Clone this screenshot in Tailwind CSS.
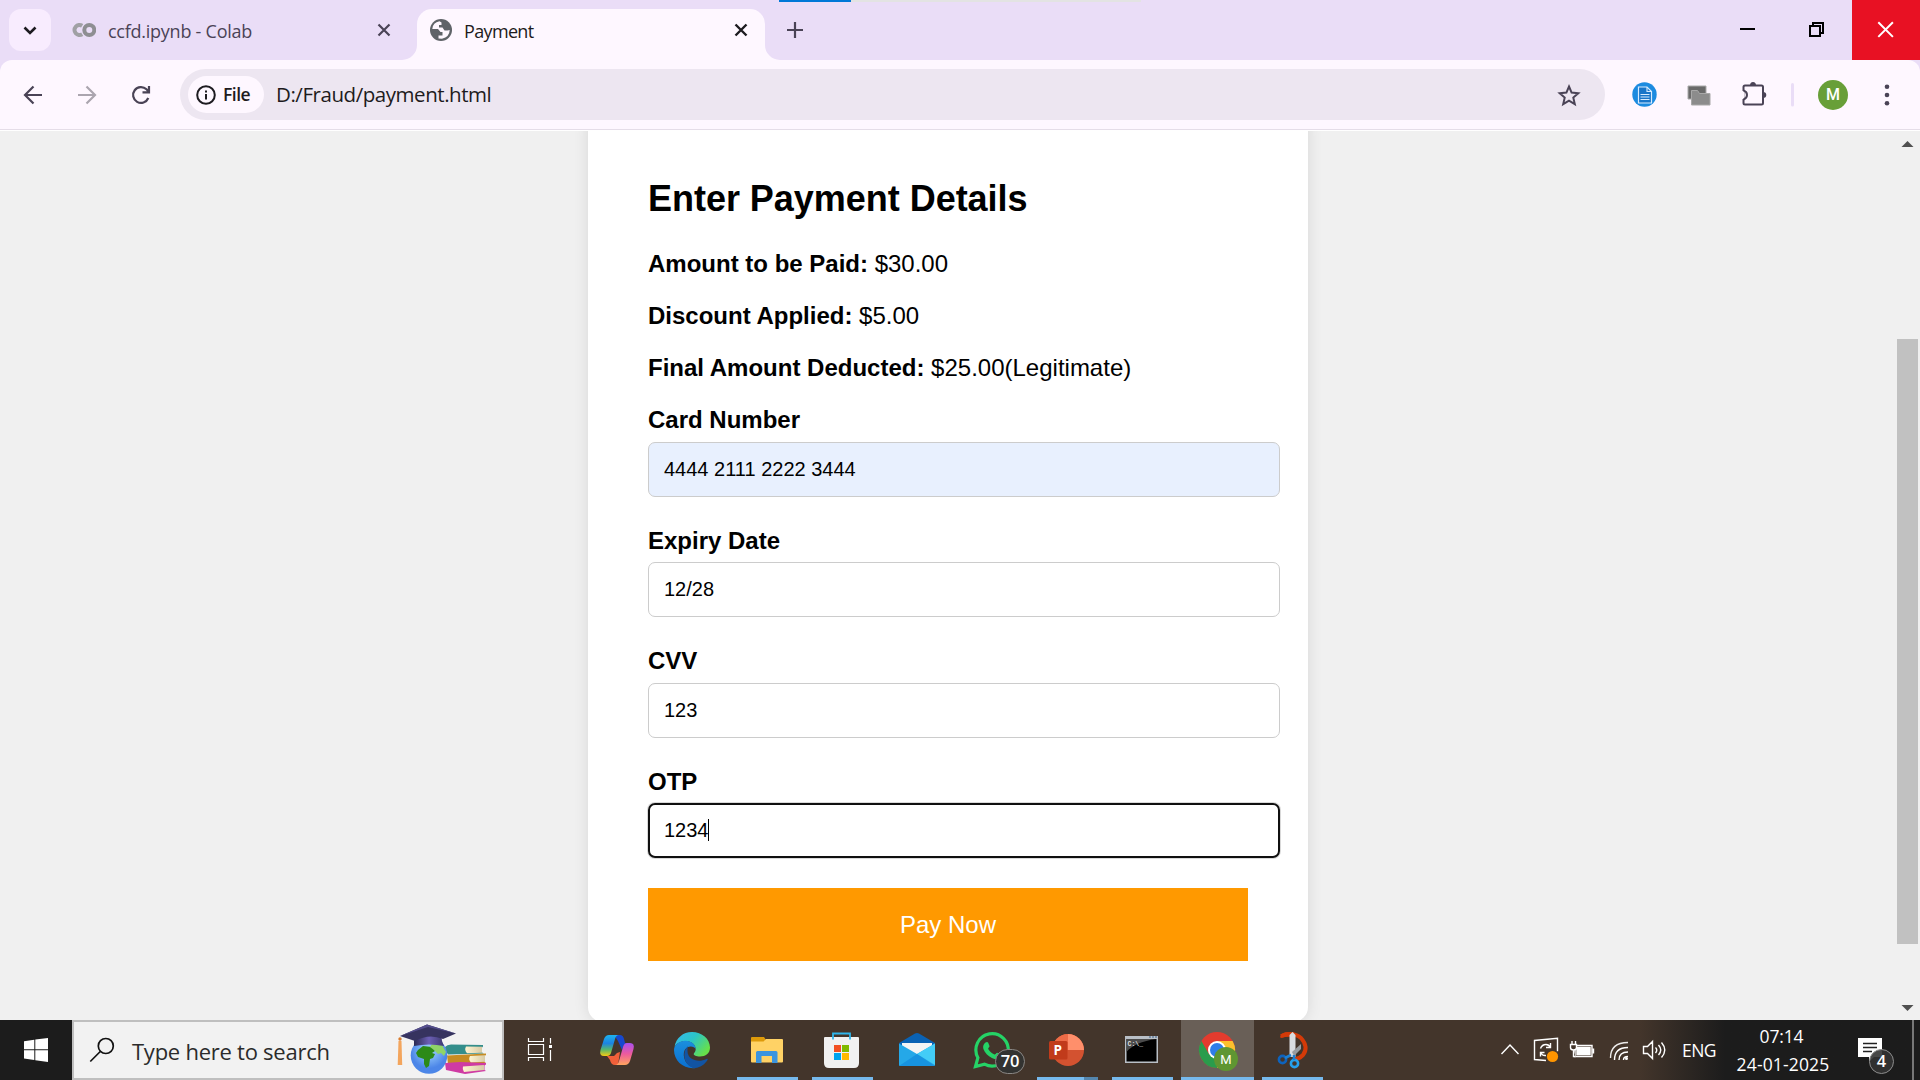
<!DOCTYPE html>
<html lang="en">
<head>
<meta charset="utf-8">
<title>Payment</title>
<script src="https://cdn.jsdelivr.net/npm/@tailwindcss/browser@4"></script>
</head>
<body class="w-[1920px] h-[1080px] overflow-hidden flex flex-col bg-[#f0f0f0] font-['Open_Sans',sans-serif]">

<!-- Tab strip -->
<header class="relative h-[60px] shrink-0 flex bg-[#eaddf7] text-[18px]">
  <div class="absolute left-[779px] top-0 w-[362px] h-[2px] bg-[#e3e3e3]"><div class="w-[72px] h-[2px] bg-[#0078d7]"></div></div>
  <button class="ml-[9px] mt-[9px] size-[42px] rounded-xl bg-[#f8ecfe] flex items-center justify-center">
    <svg class="size-[42px]" viewBox="9 9 42 42" fill="none" stroke="#1d1b20" stroke-width="2.6"><path d="M24.5 27.5l5.5 5.5 5.5-5.5"/></svg>
  </button>
  <div class="w-[366px] flex items-center pl-[21px] pr-[18px] text-[#4a4356]">
    <svg class="w-[24px] h-[16px] mr-[12px]" viewBox="0 0 24 16" fill="none" stroke-width="4"><path d="M10.2 3.8A5 5 0 1 0 10.2 12.2" stroke="#a0a0a4"/><circle cx="17.3" cy="8" r="5" stroke="#8e8e92"/></svg>
    <span class="grow tracking-[-0.25px] leading-[24px] pt-[2px]">ccfd.ipynb - Colab</span>
    <svg class="size-[30px]" viewBox="-15 -15 30 30" stroke="#4a4356" stroke-width="2.2"><path d="M-5.5-5.5L5.5 5.5M5.5-5.5L-5.5 5.5"/></svg>
  </div>
  <div class="relative w-[348px] mt-[9px] h-[51px] rounded-t-[15px] bg-[#fef7ff] flex items-center pl-[13px] pr-[9px] pb-[9px] text-[#1d1b20]">
    <svg class="absolute -left-[15px] bottom-0 size-[15px]" viewBox="0 0 15 15"><path d="M15 0V15H0A15 15 0 0 0 15 0" fill="#fef7ff"/></svg>
    <svg class="absolute -right-[15px] bottom-0 size-[15px]" viewBox="0 0 15 15"><path d="M0 0V15H15A15 15 0 0 1 0 0" fill="#fef7ff"/></svg>
    <svg class="size-[22px] mr-[12px]" viewBox="430 19 22 22"><circle cx="441" cy="30" r="11" fill="#5f6368"/><path d="M432.300 29q.5-6.500 7.200-7.700l2 1.200v2.500h-2.500v2.500h3.500l2 3h3l2.200-.5q-.2 7-7.700 8.700l-3.500-.3v-2.900h4v-3.500h-2l-2.500-3z" fill="#fef7ff"/></svg>
    <span class="grow tracking-[-0.65px] leading-[24px] pt-[2px]">Payment</span>
    <svg class="size-[30px]" viewBox="-15 -15 30 30" stroke="#1d1b20" stroke-width="2.4"><path d="M-5.5-5.5L5.5 5.5M5.5-5.5L-5.5 5.5"/></svg>
  </div>
  <svg class="ml-[15px] w-[30px] h-[60px]" viewBox="780 0 30 60" stroke="#4a4356" stroke-width="2.2"><path d="M787 30H803M795 22V38"/></svg>
  <div class="grow"></div>
  <svg class="w-[70px] h-[60px]" viewBox="1713 0 70 60"><path d="M1740 29H1755" stroke="#000" stroke-width="2"/></svg>
  <svg class="w-[69px] h-[60px]" viewBox="1783 0 69 60" fill="none" stroke="#000" stroke-width="2"><path d="M1810 26h10v10h-10zM1813 26v-3h10v10h-3"/></svg>
  <div class="w-[68px] bg-[#e81123]"><svg class="w-[68px] h-[60px]" viewBox="1852 0 68 60" stroke="#fff" stroke-width="2"><path d="M1878.3 22.3l14.6 14.6M1892.9 22.3l-14.6 14.6"/></svg></div>
</header>

<!-- Toolbar -->
<div class="h-[71px] shrink-0 bg-[#eaddf7]">
  <div class="h-[71px] rounded-t-xl bg-[#fef7ff] border-b border-white flex flex-col">
  <div class="h-[70px] border-b border-[#e5dde8] flex items-center">
    <svg class="w-[180px] h-[70px]" viewBox="0 60 180 70" fill="none" stroke-width="2.2">
      <path d="M42 95H26M33.5 86.5L25 95l8.500 8.500" stroke="#4a4356"/>
      <path d="M78 95H94M86.500 86.500L95 95l-8.500 8.500" stroke="#aba5af"/>
      <path d="M148.300 98A7.900 7.900 0 1 1 146.500 89.300L149 92M149 86V92.300H142.500" stroke="#4a4356"/>
    </svg>
    <div class="w-[1425px] h-[51px] rounded-full bg-[#ede6f1] flex items-center pl-[8px]">
      <div class="w-[76px] h-[37px] rounded-full bg-[#fef7ff] flex items-center pl-[8px]">
        <svg class="size-[20px] mr-[7px]" viewBox="0 0 20 20" fill="none" stroke="#1d1b20" stroke-width="2"><circle cx="10" cy="10" r="8.800"/><path d="M10 9V14.500M10 5.500V7.500"/></svg>
        <span class="text-[17.500px] font-semibold leading-none tracking-[-0.500px] text-[#1d1b20]">File</span>
      </div>
      <span class="ml-[12px] grow text-[20.500px] leading-[28px] pb-[2px] tracking-[-0.450px] text-[#1d1b20]">D:/Fraud/payment.html</span>
      <svg class="w-[50px] h-[51px] mr-[11px]" viewBox="1544 69 50 51" fill="none" stroke="#4a4356" stroke-width="2"><path d="M1569 86.500l2.600 6.100 6.700.6-5 4.400 1.500 6.500-5.800-3.500-5.800 3.500 1.500-6.500-5-4.400 6.700-.6z"/></svg>
    </div>
    <svg class="w-[213px] h-[70px]" viewBox="1605 60 213 70">
      <circle cx="1644.500" cy="94.500" r="12.200" fill="#1c8be0"/>
      <path d="M1638.500 87h8.500l4.500 4.500v11.500h-13z" fill="#1976c9" stroke="#d7ecff" stroke-width="1.200"/><path d="M1647 87v4.500h4.500M1640.500 94.500h9M1640.500 97h9M1640.500 99.500h9" stroke="#d7ecff" fill="none" stroke-width="1.100"/>
      <path d="M1688 86h18v13h-18z" fill="#6a6a6a" stroke="#aaa" stroke-width="1"/><path d="M1691.500 90.500h6l2 3h10.500v11.500h-18.500z" fill="#8c8c8c" stroke="#a8a8a8" stroke-width="1"/>
      <rect x="1743.500" y="85.500" width="19.500" height="19" rx="1.500" fill="none" stroke="#4a4356" stroke-width="2"/><path d="M1741 91h3.500v8h-3.500z" fill="#fef7ff"/><path d="M1743.500 90.500q3.500 1.200 3.500 4.500t-3.500 4.500" fill="none" stroke="#4a4356" stroke-width="2"/><path d="M1750 85.500a3 3.500 0 0 1 6 0zM1763 92a3.300 3 0 0 1 0 6z" fill="#4a4356"/>
      <rect x="1791" y="83" width="3" height="23.500" rx="1.500" fill="#eaddf7"/>
    </svg>
    <div class="size-[30px] rounded-full bg-[#689f38] text-white text-[16px] font-medium flex items-center justify-center pt-px font-['Roboto',sans-serif]">M</div>
    <svg class="w-[72px] h-[70px]" viewBox="1848 60 72 70" fill="#4a4356"><circle cx="1887" cy="86.700" r="2.300"/><circle cx="1887" cy="95" r="2.300"/><circle cx="1887" cy="103.300" r="2.300"/></svg>
  </div>
  </div>
</div>

<!-- Page -->
<div class="h-[889px] shrink-0 flex bg-[#f0f0f0] overflow-hidden">
  <main class="w-[1896px] flex justify-center overflow-hidden font-['Liberation_Sans',Arial,sans-serif] text-black text-[24px] leading-[28px]">
    <section class="-mt-[20px] w-[720px] h-[911px] bg-white rounded-[15px] shadow-[0_0_15px_rgba(0,0,0,0.1)] pt-[67px] px-[60px]">
      <h2 class="text-[36px] leading-[42px] font-bold mb-[30px] tracking-[-0.030px]">Enter Payment Details</h2>
      <p class="mb-6"><strong>Amount to be Paid:</strong> $30.00</p>
      <p class="mb-6"><strong>Discount Applied:</strong> $5.00</p>
      <p class="mb-6"><strong>Final Amount Deducted:</strong> $25.00(Legitimate)</p>
      <div class="h-[120.500px]"><label class="block font-bold mb-2">Card Number</label>
        <div class="w-[632px] h-[55px] border border-[#ccc] rounded-[7px] bg-[#e8f0fe] flex items-center pl-[15px] pb-[2px] text-[20px]">4444 2111 2222 3444</div></div>
      <div class="h-[120.500px]"><label class="block font-bold mb-[7.500px]">Expiry Date</label>
        <div class="w-[632px] h-[55px] border border-[#ccc] rounded-[7px] flex items-center pl-[15px] pb-[2px] text-[20px]">12/28</div></div>
      <div class="h-[120.500px]"><label class="block font-bold mb-2">CVV</label>
        <div class="w-[632px] h-[55px] border border-[#ccc] rounded-[7px] flex items-center pl-[15px] pb-[2px] text-[20px]">123</div></div>
      <div class="h-[120.500px]"><label class="block font-bold mb-[7.500px]">OTP</label>
        <div class="w-[632px] h-[55px] border-2 border-[#101010] rounded-[7px] ring-1 ring-black/15 flex items-center pl-[14px] pb-[2px] text-[20px]">1234<span class="-ml-px w-px h-[22px] bg-black"></span></div></div>
      <button class="w-[600px] h-[73px] bg-[#ff9900] text-white text-[24px] flex items-center justify-center">Pay Now</button>
    </section>
  </main>
  <div class="w-[24px] flex flex-col">
    <svg class="w-[24px] h-[208px]" viewBox="1896 131 24 208"><path d="M1901.500 147L1907.500 141L1913.500 147z" fill="#505050"/></svg>
    <div class="ml-px w-[21px] h-[605px] bg-[#c1c1c1]"></div>
    <svg class="w-[24px] h-[76px]" viewBox="1896 944 24 76"><path d="M1901.500 1005L1907.500 1011L1913.500 1005z" fill="#505050"/></svg>
  </div>
</div>

<!-- Taskbar -->
<footer class="h-[60px] shrink-0 flex bg-linear-to-r from-[#43352b] from-[1640px] to-[#1c1c1c] to-[1725px] text-white">
  <div class="w-[72px] bg-[#1c1c1c]"><svg class="w-[72px] h-[60px]" viewBox="0 1020 72 60" fill="#fff"><path d="M24 1041.200l10.300-1.400v9.400H24zM35.300 1039.600L48 1038v11.200H35.300zM24 1050.200h10.300v9.700L24 1058.500zM35.300 1050.200H48V1062l-12.700-1.800z"/></svg></div>
  <div class="w-[432px] border-2 border-[#bfbfbf] bg-[#f2f2f2] flex items-center text-[#2b2b2b]">
    <svg class="w-[58px] h-[56px]" viewBox="74 1022 58 56" fill="none" stroke="#111" stroke-width="1.700"><circle cx="105.800" cy="1046" r="7.500"/><path d="M100.300 1051.500L90.300 1061.500"/></svg>
    <span class="w-[256px] whitespace-nowrap text-[22px] tracking-[-0.250px] leading-[30px] pt-px">Type here to search</span>
    <svg class="w-[114px] h-[56px]" viewBox="388 1022 114 56">
      <defs>
        <linearGradient id="cap" x1="0" x2="1"><stop offset="0" stop-color="#2b2a52"/><stop offset=".5" stop-color="#6c5fb5"/><stop offset="1" stop-color="#3d3970"/></linearGradient>
        <radialGradient id="globe" cx=".5" cy=".35"><stop offset="0" stop-color="#a6dbff"/><stop offset="1" stop-color="#4c86e8"/></radialGradient>
        <linearGradient id="page" x1="0" x2="1"><stop offset="0" stop-color="#fff5d2"/><stop offset="1" stop-color="#d8cba6"/></linearGradient>
      </defs>
      <path d="M445 1047q2-2.500 6-2.500l32 .5v1.500l-1 1v5l2 1-36 1q-3-4-3-7.500" fill="#348e8b"/><path d="M466 1046.500l16 .3v6l-15 .5q-3-3.500-1-6.800" fill="url(#page)"/>
      <path d="M447 1055.500l39-2v1.500l-1.500 1v6l1.500 1-38 1z" fill="#c68c23"/><path d="M470 1056l15-.8v6.500l-14 .8q-3-3-1-6.500" fill="url(#page)"/>
      <path d="M445 1063l15-1 26 1v1.500l-1.500 1v4.500l1.500 1-21 3-19-4z" fill="#cf3ba3"/><path d="M463 1066.500l21-1.500v5l-20 2q-2-2.500-1-5.500" fill="url(#page)"/>
      <circle cx="429" cy="1055.500" r="18.300" fill="url(#globe)"/>
      <path d="M418 1050l5-4 9 1 3 4-3 2 3 1-2 4-3 1-1 7-3 2-2-4v-5l-6-2-2-4z" fill="#2c8a17"/><path d="M432 1044l10 1 4 7-2 4-3-3-3 1-4-4-4-3z" fill="#8fd468"/>
      <path d="M414 1041q0-9 14-9t14 9l2 5q-15-3-30 0z" fill="url(#cap)"/>
      <path d="M400 1036l27-11.500 29 9-13 5.500q-14-6-28 2z" fill="#36335f"/><path d="M400 1036l28-9 28 6.500-29-9z" fill="#544e8c"/>
      <path d="M398.500 1041h3l.7 24h-4.500z" fill="#f3a55d"/><circle cx="400" cy="1039" r="1.700" fill="#d97b2c"/>
    </svg>
  </div>

  <svg class="w-[76px] h-[60px]" viewBox="504 1020 76 60" fill="none" stroke="#fff" stroke-width="1.200"><path d="M528.500 1038v3.500h15v-3.500M528.500 1061v-3.500h15v3.500M528.500 1044.500h15v10h-15zM550.500 1038v5.500M550.500 1050v11"/><path d="M549 1045h3v3h-3z" fill="#fff" stroke="none"/></svg>

  <svg class="w-[75px] h-[60px]" viewBox="580 1020 75 60">
    <defs>
      <linearGradient id="cp1" x1="0" y1="0" x2="0" y2="1"><stop offset="0" stop-color="#1db3ee"/><stop offset=".4" stop-color="#1c83e2"/><stop offset=".7" stop-color="#58b86a"/><stop offset="1" stop-color="#f5cb12"/></linearGradient>
      <linearGradient id="cp2" x1="0" y1="0" x2="0" y2="1"><stop offset="0" stop-color="#a84ff0"/><stop offset=".5" stop-color="#ee5b9c"/><stop offset="1" stop-color="#ffa55e"/></linearGradient>
    </defs>
    <path d="M614 1035h6q3 0 4 4l1 4h4q-5 0-6 4l-1 3-4-9z" fill="#1648cf"/>
    <path d="M607 1056h7l3-3 3-1-2 13h-3q-4 0-5-5z" fill="#f0603a"/>
    <path d="M609 1035h10q-3 0-4 4l-4 14q-1 3-4 3h-3q-5 0-3.500-6l3.500-11q1.500-4 5-4" fill="url(#cp1)"/>
    <path d="M625 1065h-10q3 0 4-4l4-14q1-4 4-4h3q5 0 3.500 6l-3.500 12q-1.500 4-5 4" fill="url(#cp2)"/>
  </svg>

  <svg class="w-[75px] h-[60px]" viewBox="655 1020 75 60">
    <defs>
      <linearGradient id="eg1" x1="0" y1="0" x2="1" y2=".6"><stop offset="0" stop-color="#36b8ef"/><stop offset=".5" stop-color="#2bc4c8"/><stop offset="1" stop-color="#67e04a"/></linearGradient>
      <linearGradient id="eg2" x1="0" y1="0" x2="0" y2="1"><stop offset="0" stop-color="#1b8fdd"/><stop offset="1" stop-color="#0a6fd0"/></linearGradient>
    </defs>
    <path d="M674.500 1047C676 1038 683 1032 692 1032c10 0 18 7 18 15.500 0 6-4.500 9-10 9-4 0-6.300-1.400-6.300-2.600 0-1 2-1.700 2-4.700 0-4-4-8.200-10-8.200-5 0-9.200 2.500-11.200 6" fill="url(#eg1)"/>
    <path d="M674 1050c0-5 5.500-9.200 11.500-9.200 6 0 10.200 4.200 10.200 8.200-1.500-3-8-4-11 1-3 6 1 17 11 18-12 1.500-21.700-7-21.700-18" fill="url(#eg2)"/>
    <path d="M688 1046c-7 7-3.500 21 7 22 6-.5 10-4 12.500-8 .5-1-.2-1.500-1-1-8 4-19 1-19-8 0-2 .2-4 .5-5" fill="#1254a3"/>
  </svg>

  <div class="relative w-[75px] h-[60px]"><svg class="size-full" viewBox="730 1020 75 60">
    <path d="M751 1038q0-1 1-1h12l2 3-2 3h-13z" fill="#dd9a0a"/><path d="M751 1041.500h12.500l2.500-2.500h16q1 0 1 1v21.500q0 1-1 1h-30q-1 0-1-1z" fill="#ffd265"/>
    <path d="M756 1063v-10.500q0-1.500 1.500-1.500h18.500q1.500 0 1.500 1.500v10.500h-5.500v-7h-10.500v7z" fill="#3b94de"/></svg>
    <div class="absolute bottom-0 left-[7px] w-[61px] h-[3px] bg-[#76b9ed]"></div></div>

  <div class="relative w-[75px] h-[60px]"><svg class="size-full" viewBox="805 1020 75 60">
    <path d="M824 1038q0-1 1-1h33q1 0 1 1v25q0 5-5 5h-25q-5 0-5-5z" fill="#f1f1f1"/><path d="M833 1039.500v-6h17v6" fill="none" stroke="#2fb6ec" stroke-width="1.800"/>
    <path d="M834 1045h7v7h-7z" fill="#f25022"/><path d="M842 1045h7v7h-7z" fill="#7fba00"/><path d="M834 1053h7v7h-7z" fill="#00a4ef"/><path d="M842 1053h7v7h-7z" fill="#ffb900"/></svg>
    <div class="absolute bottom-0 left-[7px] w-[61px] h-[3px] bg-[#76b9ed]"></div></div>

  <svg class="w-[75px] h-[60px]" viewBox="880 1020 75 60">
    <path d="M899 1043l16-9.500q2-1.200 4 0l16 9.500v4h-36z" fill="#0a62b4"/><path d="M902 1043h30v5l-13 9-17-9z" fill="#f4f4f4"/><path d="M899 1043.500l18 10.500 18-10.500v21.500q0 1-1 1h-34q-1 0-1-1z" fill="#25a8e8"/><path d="M917 1054l18-10.500v21.500z" fill="#43cdf7"/><path d="M899 1066l18-12 18 12z" fill="#1793e0"/>
  </svg>

  <div class="relative w-[75px] h-[60px]"><svg class="size-full" viewBox="955 1020 75 60">
    <path d="M975.500 1066.500l2.400-8.800A16.200 16.200 0 1 1 984.500 1064.200z" fill="none" stroke="#25d366" stroke-width="3.200"/>
    <path d="M985.500 1042.500c1-.8 2.200-.8 2.700.2l1.300 3.200c.3.800-1.700 2.300-1.300 3 1.500 2.700 3.600 4.300 6.300 5.500.8.300 2-2 2.800-1.700l3.600 1.700c1 .5.500 3-1 4-2.300 1.500-5 1-8-.5-4-2-7-5-8.500-9-.8-2.700.2-5.200 2.100-6.400" fill="#25d366"/></svg>
    <div class="absolute left-[40px] top-[29px] w-[30px] h-[25px] rounded-full bg-[#333331] border border-[#8a8784] text-[16.500px] font-semibold tracking-[-0.300px] flex items-center justify-center leading-none">70</div></div>

  <div class="relative w-[75px] h-[60px]"><svg class="size-full" viewBox="1030 1020 75 60">
    <circle cx="1068" cy="1050" r="16" fill="#d35230"/><path d="M1068 1034a16 16 0 0 0-16 16h16z" fill="#ed6c47"/><path d="M1068 1034a16 16 0 0 1 16 16h-16z" fill="#ff8f6b"/>
    <rect x="1049" y="1041" width="18.500" height="18.500" rx="1.500" fill="#c13b1b"/><text x="1053.500" y="1055.200" font-family="Open Sans" font-weight="700" font-size="13.500" fill="#fff">P</text></svg>
    <div class="absolute bottom-0 left-[7px] w-[61px] h-[3px] bg-[#5486ae]"><div class="w-[47px] h-[3px] bg-[#76b9ed]"></div></div></div>

  <div class="relative w-[75px] h-[60px]"><svg class="size-full" viewBox="1105 1020 75 60">
    <path d="M1125 1036h33v27h-33z" fill="#b9bfc6"/><path d="M1126.500 1039h30v22.500h-30z" fill="#000"/><path d="M1126.500 1039h30q-22 3-30 13z" fill="#4b4b4b"/><path d="M1149 1037h2M1152 1037h2M1155 1037h2" stroke="#3c6089"/>
    <text x="1127.500" y="1045.800" font-family="Liberation Mono" font-weight="700" font-size="6.500" fill="#ddd">C:\_</text></svg>
    <div class="absolute bottom-0 left-[7px] w-[61px] h-[3px] bg-[#76b9ed]"></div></div>

  <div class="relative w-[75px] h-[60px]"><div class="absolute left-px top-0 w-[73px] h-[60px] bg-[#695f57]"></div><svg class="absolute inset-0 size-full" viewBox="1180 1020 75 60">
    <circle cx="1217" cy="1050" r="18" fill="#e33b2e"/>
    <path d="M1217 1050L1209.200 1054.500 1201.400 1041A18 18 0 0 0 1217 1068l7.800-13.500z" fill="#2a9c4c"/>
    <path d="M1217 1041h15.600A18 18 0 0 1 1217 1068l7.800-13.500z" fill="#fbc02d"/>
    <circle cx="1217" cy="1050" r="9" fill="#fff"/><circle cx="1217" cy="1050" r="7" fill="#2f7de9"/>
    <circle cx="1226" cy="1059" r="12" fill="#5f9632"/><text x="1226" y="1063.800" text-anchor="middle" font-family="Roboto" font-size="13" fill="#fff">M</text></svg>
    <div class="absolute bottom-0 left-px w-[73px] h-[3px] bg-[#76b9ed]"></div></div>

  <div class="relative w-[75px] h-[60px]"><svg class="size-full" viewBox="1255 1020 75 60" fill="none">
    <path d="M1281 1036q12-5 20 2 8 9 2 17-4 4-8 4" stroke="#d33a08" stroke-width="4"/><path d="M1280 1037q1-5 9-5h5v5q-7-1-13 1z" fill="#d33a08"/>
    <path d="M1289.500 1057V1035l3-3 3 3v22z" fill="#d9dce0"/><path d="M1292 1052l9-8v5l-7 7z" fill="#989ca0"/>
    <circle cx="1282.500" cy="1059.500" r="3.600" stroke="#0e63bd" stroke-width="2.600"/><circle cx="1294.500" cy="1063.500" r="3.600" stroke="#25a0ec" stroke-width="2.600"/><path d="M1285 1058l6-3M1294 1060v-5" stroke="#1b80d4" stroke-width="2.600"/></svg>
    <div class="absolute bottom-0 left-[7px] w-[61px] h-[3px] bg-[#76b9ed]"></div></div>

  <div class="grow"></div>

  <svg class="w-[190px] h-[60px]" viewBox="1490 1020 190 60" fill="none" stroke="#fff" stroke-width="1.400">
    <path d="M1501.500 1054l8.500-9 8.500 9"/>
    <path d="M1546 1060.500l-11.500-1v-19l23-2.300v13"/><path d="M1540.500 1048.500q1.500-4 5.500-4 3 0 4.500 3M1550.500 1043v4.500h-4.500M1540.500 1056.500v-4h4M1541 1053q1.500 3 5 2.500"/><circle cx="1552.500" cy="1056.500" r="5.600" fill="#ff9500" stroke="none"/>
    <path d="M1575 1045.500h17v11h-17zM1593.500 1048.500v5"/><path d="M1577 1047.500h13v7h-13z" fill="#fff"/><path d="M1570.500 1044.500h6v3q0 2.500-3 2.500t-3-2.500zM1572 1041v3M1575.500 1041v3M1573.500 1050v6.500h2" fill="#43352b"/>
    <path d="M1610.500 1058q0-15.500 17.500-15.500" opacity=".9"/><path d="M1614.500 1060q0-12.500 13.500-12.500M1619 1060q0-8 9-8M1623.500 1060q0-3.500 4.500-3.500"/><circle cx="1626.500" cy="1058.500" r="1.500" fill="#fff" stroke="none"/>
    <path d="M1643.500 1046.500h4l5-5v17l-5-5h-4zM1655.500 1047.500q2.500 2.500 0 5.500M1658.500 1045q4.500 5 0 10M1661.500 1042.500q6.500 7.500 0 15"/>
  </svg>
  <div class="w-[38px] mr-[2px] flex items-center justify-center text-[17.500px] tracking-[-0.600px]">ENG</div>
  <div class="w-[126px] flex flex-col items-center justify-center text-[17.500px] leading-[28px]"><span class="-mr-px tracking-[-0.150px] -ml-[4px]">07:14</span><span class="tracking-[0.150px]">24-01-2025</span></div>
  <div class="relative w-[66px] h-[60px]"><svg class="size-full" viewBox="1846 1020 66 60"><path d="M1858 1038h24v19h-8l-5 4.500v-4.500h-11z" fill="#fff"/><path d="M1863 1043.500h14M1863 1047.500h14M1863 1051.500h9" stroke="#222" stroke-width="1.300"/></svg>
    <div class="absolute left-[23px] top-[29px] size-[25px] rounded-full bg-[#333]/90 border border-[#8d8d8d] flex items-center justify-center text-[16.500px] font-semibold leading-none">4</div></div>
  <div class="w-[2px] bg-[#777]"></div><div class="w-[6px]"></div>
</footer>
</body>
</html>
